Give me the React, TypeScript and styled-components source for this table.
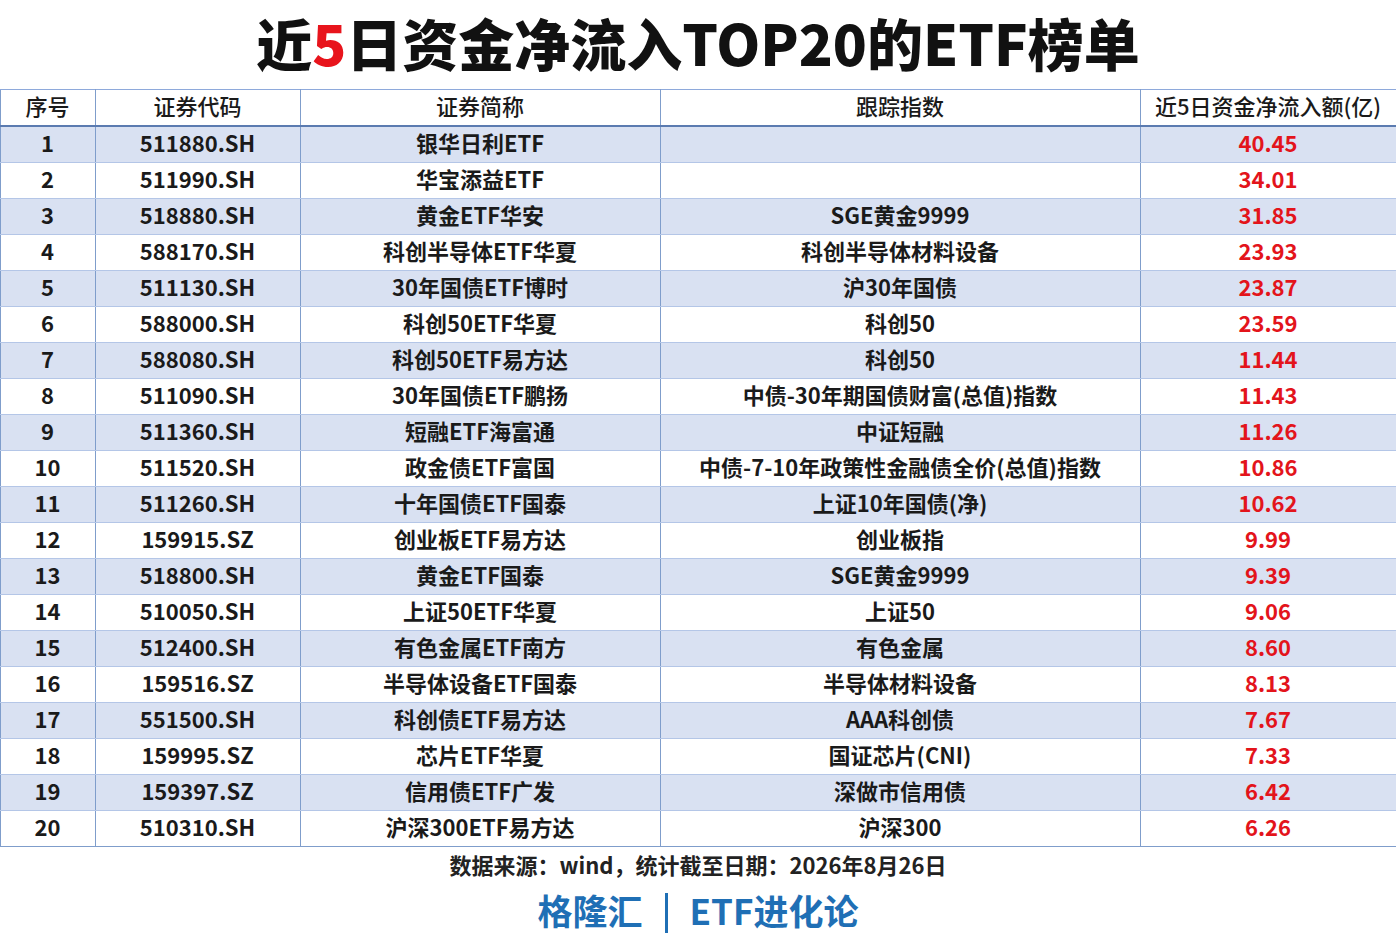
import React from "react";
import styled, { createGlobalStyle } from "styled-components";

const Global = createGlobalStyle`
  html, body { margin: 0; padding: 0; background: #ffffff; }
  body { font-family: "Noto Sans CJK SC", "Noto Sans", sans-serif; color: #1a1a1a; }
`;

const Page = styled.div`
  width: 1396px;
  height: 941px;
  display: flex;
  flex-direction: column;
  align-items: center;
  background: #fff;
`;

const Title = styled.h1`
  margin: 0;
  height: 89px;
  box-sizing: border-box;
  padding-bottom: 6px;
  display: flex;
  align-items: center;
  justify-content: center;
  font-size: 56px;
  font-weight: 900;
  color: #111;
  line-height: 1;
`;

const Red = styled.span`
  color: #e8141c;
`;

const Table = styled.table`
  width: 1396px;
  border-collapse: collapse;
  table-layout: fixed;
`;

const Col = styled.col<{ $w: number }>`
  width: ${(p) => p.$w}px;
`;

const HeadCell = styled.th`
  height: 35px;
  padding: 0;
  vertical-align: top;
  font-size: 22px;
  font-weight: 500;
  color: #1a1a1a;
  text-align: center;
  border-left: 1.5px solid #7f9dcb;
  border-right: 1.5px solid #7f9dcb;
  border-top: 1px solid #8ea9db;
  border-bottom: 2.5px solid #5b7bb0;
  white-space: nowrap;
`;

const Row = styled.tr<{ $stripe: boolean }>`
  background: ${(p) => (p.$stripe ? "#d9e1f2" : "#ffffff")};
`;

const Cell = styled.td<{ $red?: boolean }>`
  height: 35px;
  padding: 0;
  vertical-align: top;
  font-size: 22px;
  font-weight: 600;
  line-height: 1;
  text-align: center;
  color: ${(p) => (p.$red ? "#e3141b" : "#1a1a1a")};
  border-left: 1.5px solid #7f9dcb;
  border-right: 1.5px solid #7f9dcb;
  border-bottom: 1px solid #b4c6e7;
  white-space: nowrap;
`;

const CellText = styled.div`
  height: 35px;
  box-sizing: border-box;
  padding-bottom: 5px;
  display: flex;
  align-items: center;
  justify-content: center;
`;

const LastRow = styled(Row)`
  & > td {
    border-bottom: 1.5px solid #7f9dcb;
  }
`;

const Source = styled.div`
  height: 34px;
  display: flex;
  align-items: center;
  font-size: 22px;
  font-weight: 700;
  color: #222;
`;

const Brand = styled.div`
  margin-top: 8px;
  display: flex;
  align-items: center;
  gap: 22px;
  font-size: 35px;
  font-weight: 700;
  color: #1f6fb5;
  line-height: 1;
`;

const Bar = styled.span`
  display: inline-block;
  width: 3px;
  height: 40px;
  background: #1f6fb5;
  transform: translateY(4px);
`;

type R = [string, string, string, string];

const rows: R[] = [
  ["511880.SH", "银华日利ETF", "", "40.45"],
  ["511990.SH", "华宝添益ETF", "", "34.01"],
  ["518880.SH", "黄金ETF华安", "SGE黄金9999", "31.85"],
  ["588170.SH", "科创半导体ETF华夏", "科创半导体材料设备", "23.93"],
  ["511130.SH", "30年国债ETF博时", "沪30年国债", "23.87"],
  ["588000.SH", "科创50ETF华夏", "科创50", "23.59"],
  ["588080.SH", "科创50ETF易方达", "科创50", "11.44"],
  ["511090.SH", "30年国债ETF鹏扬", "中债-30年期国债财富(总值)指数", "11.43"],
  ["511360.SH", "短融ETF海富通", "中证短融", "11.26"],
  ["511520.SH", "政金债ETF富国", "中债-7-10年政策性金融债全价(总值)指数", "10.86"],
  ["511260.SH", "十年国债ETF国泰", "上证10年国债(净)", "10.62"],
  ["159915.SZ", "创业板ETF易方达", "创业板指", "9.99"],
  ["518800.SH", "黄金ETF国泰", "SGE黄金9999", "9.39"],
  ["510050.SH", "上证50ETF华夏", "上证50", "9.06"],
  ["512400.SH", "有色金属ETF南方", "有色金属", "8.60"],
  ["159516.SZ", "半导体设备ETF国泰", "半导体材料设备", "8.13"],
  ["551500.SH", "科创债ETF易方达", "AAA科创债", "7.67"],
  ["159995.SZ", "芯片ETF华夏", "国证芯片(CNI)", "7.33"],
  ["159397.SZ", "信用债ETF广发", "深做市信用债", "6.42"],
  ["510310.SH", "沪深300ETF易方达", "沪深300", "6.26"],
];

const headers = ["序号", "证券代码", "证券简称", "跟踪指数", "近5日资金净流入额(亿)"];
const widths = [95, 205, 360, 480, 256];

export default function App() {
  return (
    <Page>
      <Global />
      <Title>
        近<Red>5</Red>日资金净流入TOP20的ETF榜单
      </Title>
      <Table>
        <colgroup>
          {widths.map((w, i) => (
            <Col key={i} $w={w} />
          ))}
        </colgroup>
        <thead>
          <tr>
            {headers.map((h) => (
              <HeadCell key={h}>
                <CellText>{h}</CellText>
              </HeadCell>
            ))}
          </tr>
        </thead>
        <tbody>
          {rows.map((r, i) => {
            const RowComp = i === rows.length - 1 ? LastRow : Row;
            return (
              <RowComp key={i} $stripe={i % 2 === 0}>
                <Cell><CellText>{i + 1}</CellText></Cell>
                <Cell><CellText>{r[0]}</CellText></Cell>
                <Cell><CellText>{r[1]}</CellText></Cell>
                <Cell><CellText>{r[2]}</CellText></Cell>
                <Cell $red><CellText>{r[3]}</CellText></Cell>
              </RowComp>
            );
          })}
        </tbody>
      </Table>
      <Source>数据来源：wind，统计截至日期：2026年8月26日</Source>
      <Brand>
        <span>格隆汇</span>
        <Bar />
        <span>ETF进化论</span>
      </Brand>
    </Page>
  );
}
